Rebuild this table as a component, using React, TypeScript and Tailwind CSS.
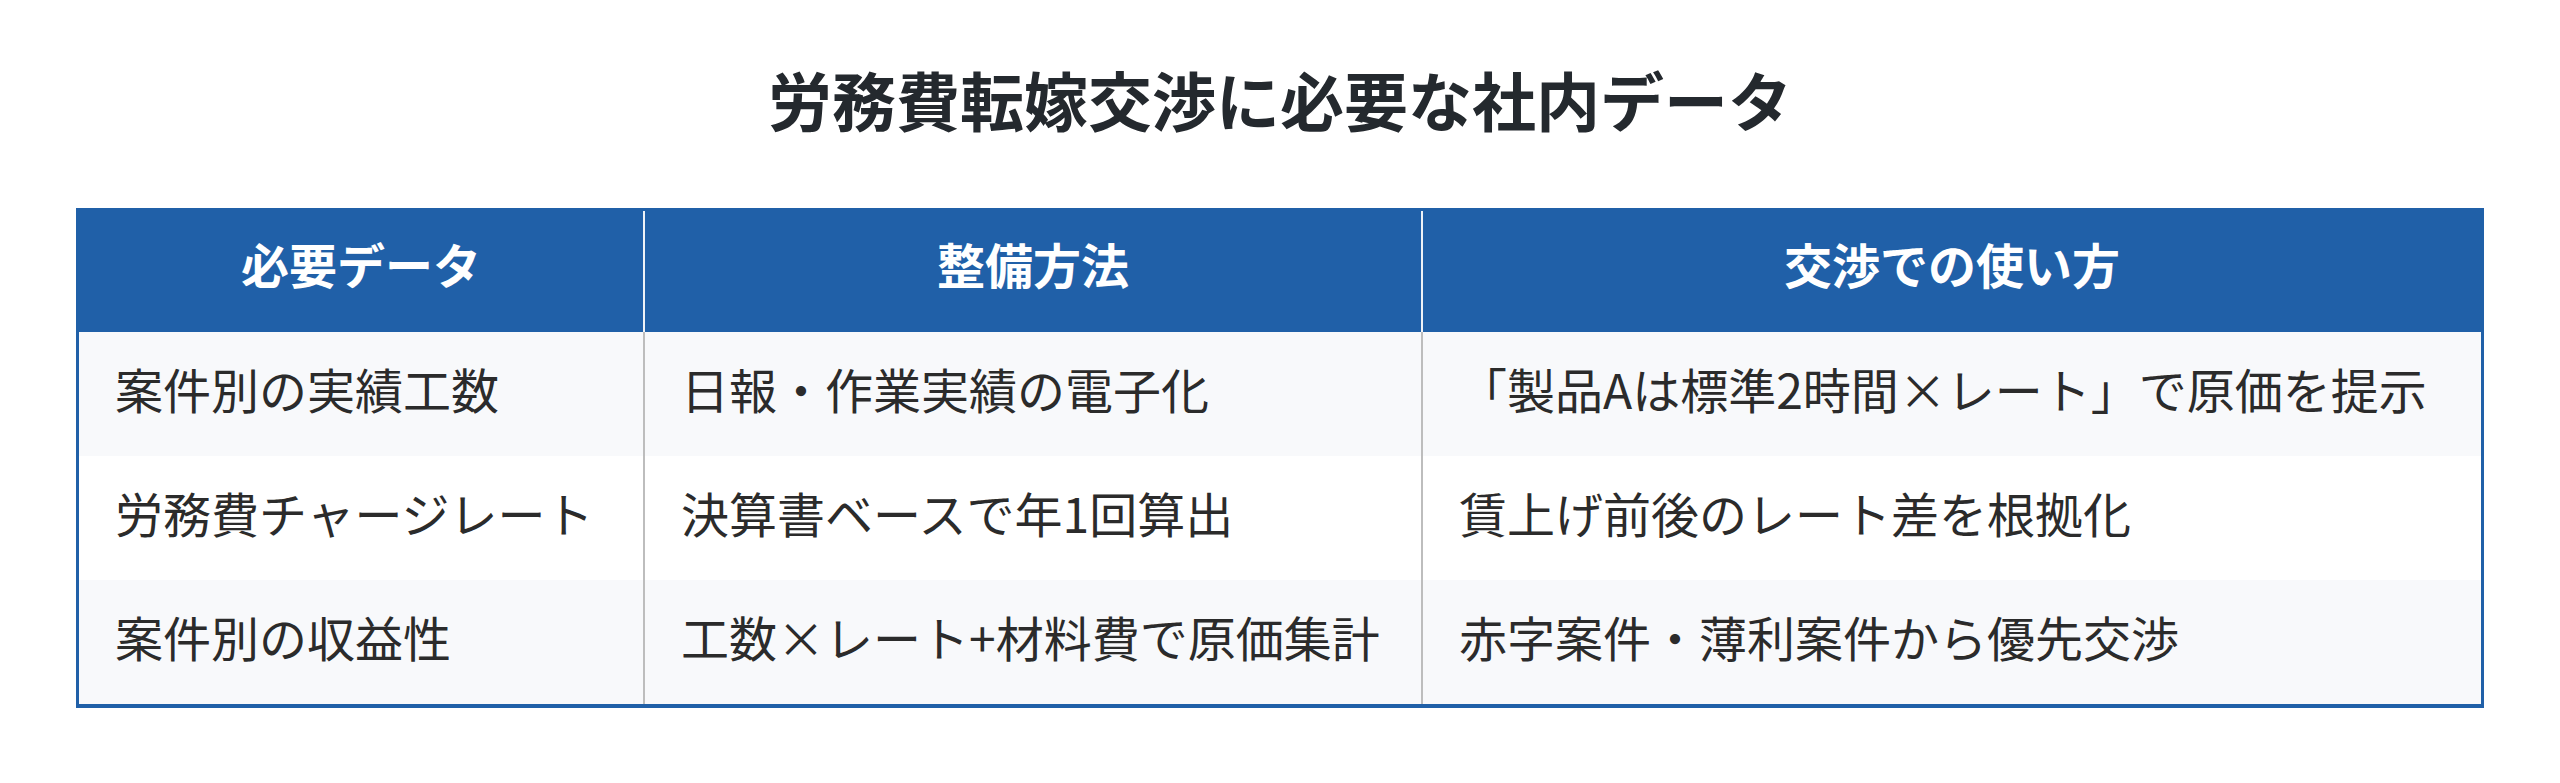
const headers = ['必要データ', '整備方法', '交渉での使い方'];

const rows = [
  ['案件別の実績工数', '日報・作業実績の電子化', '「製品Aは標準2時間×レート」で原価を提示'],
  ['労務費チャージレート', '決算書ベースで年1回算出', '賃上げ前後のレート差を根拠化'],
  ['案件別の収益性', '工数×レート+材料費で原価集計', '赤字案件・薄利案件から優先交渉'],
];

const font = { fontFamily: '"Noto Sans CJK JP", "Noto Sans", sans-serif' };

export default function App() {
  return (
    <div className="w-full h-[783px] bg-white px-[76px]" style={font}>
      <h1 className="pt-[56px] h-[143px] text-center text-[64px] leading-[84px] font-bold text-[#24292e]">
        労務費転嫁交渉に必要な社内データ
      </h1>
      <div className="mt-[65px] border-[3px] border-b-4 border-[#2060a8]">
        <div className="grid grid-cols-[566px_778px_1fr] bg-[#2060a8] h-[121px]">
          {headers.map((h, i) => (
            <div
              key={h}
              className={`flex items-center justify-center pb-[18px] text-[48px] font-bold text-white ${
                i < 2 ? 'border-r-2 border-[#eef2f7]' : ''
              }`}
            >
              {h}
            </div>
          ))}
        </div>
        {rows.map((r, ri) => (
          <div
            key={ri}
            className={`grid grid-cols-[566px_778px_1fr] h-[124px] ${ri % 2 === 0 ? 'bg-[#f8f9fb]' : 'bg-white'}`}
          >
            {r.map((c, i) => (
              <div
                key={i}
                className={`flex items-center pl-[36px] pb-[12px] text-[48px] text-[#2b2b2b] whitespace-nowrap ${
                  i < 2 ? 'border-r-2 border-[#bdbdbd]' : ''
                }`}
              >
                {c}
              </div>
            ))}
          </div>
        ))}
      </div>
    </div>
  );
}
